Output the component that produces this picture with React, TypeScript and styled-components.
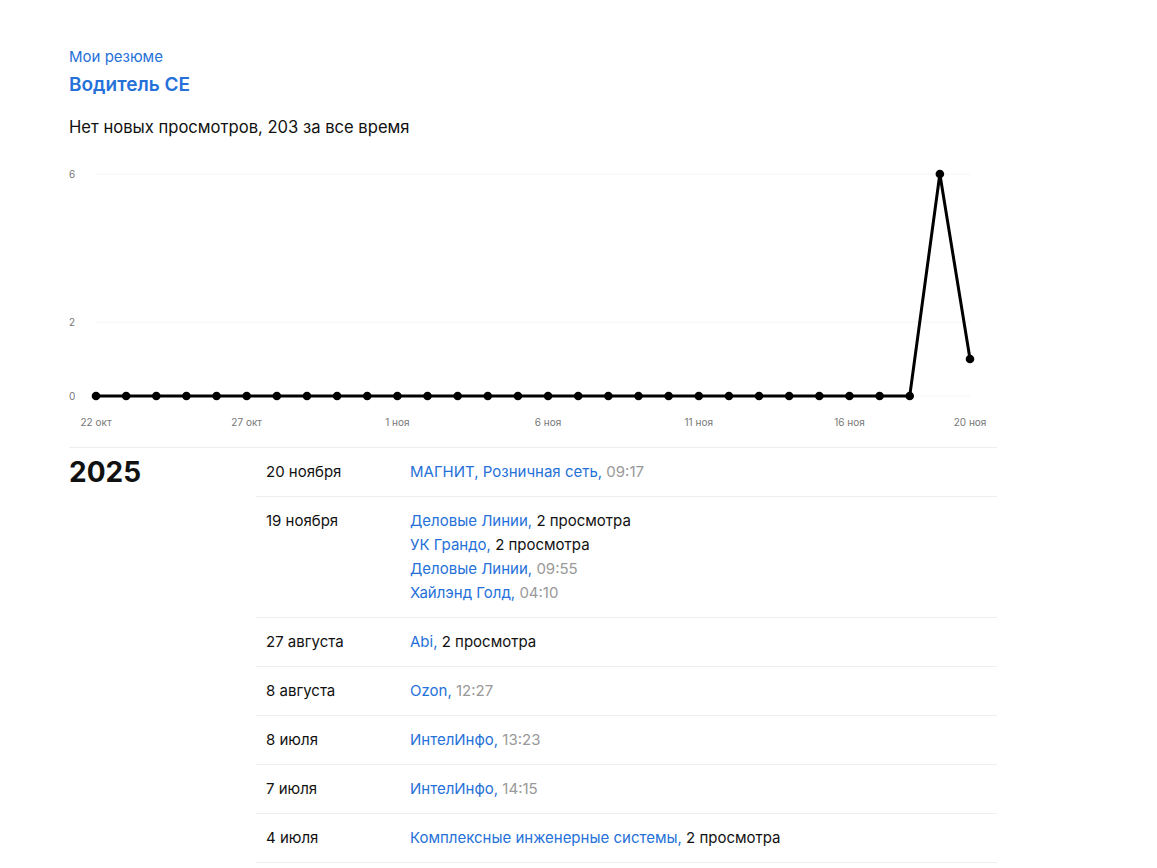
import React from 'react';
import styled, { createGlobalStyle } from 'styled-components';

const GlobalStyle = createGlobalStyle`
  body {
    margin: 0;
    background: #fff;
    font-family: 'Inter', 'Liberation Sans', sans-serif;
    color: #111;
  }
`;

const Page = styled.div`
  padding: 47px 0 0 69px;
  width: 928px;
`;

const Crumb = styled.a`
  display: block;
  font-size: 15px;
  line-height: 20px;
  color: #2671d9;
  text-decoration: none;
`;

const Title = styled.h1`
  margin: 6px 0 0;
  font-size: 19px;
  line-height: 24px;
  font-weight: 600;
  color: #2671d9;
`;

const Summary = styled.p`
  margin: 19px 0 0;
  font-size: 16.6px;
  line-height: 22px;
`;

const ChartBox = styled.div`
  margin-top: 22px;
  height: 275px;
`;

const History = styled.section`
  margin-top: 12px;
  border-top: 1px solid #eceef0;
  display: grid;
  grid-template-columns: 187px 741px;
`;

const Year = styled.div`
  padding-top: 7px;
  font-size: 28px;
  line-height: 34px;
  font-weight: 700;
`;

const Rows = styled.div`
  display: flex;
  flex-direction: column;
`;

const Row = styled.div`
  display: grid;
  grid-template-columns: 144px 1fr;
  padding: 12px 0 12px 10px;
  border-bottom: 1px solid #eceef0;
  font-size: 15px;
  line-height: 24px;
`;

const DateCell = styled.div`
  color: #111;
`;

const Entries = styled.div`
  display: flex;
  flex-direction: column;
`;

const Company = styled.a`
  color: #2671d9;
  text-decoration: none;
`;

const Note = styled.span<{ $muted?: boolean }>`
  color: ${(p) => (p.$muted ? '#999' : '#111')};
`;

type Entry = { company: string; note: string; time?: boolean };

const history: { date: string; entries: Entry[] }[] = [
  { date: '20 ноября', entries: [{ company: 'МАГНИТ, Розничная сеть,', note: '09:17', time: true }] },
  {
    date: '19 ноября',
    entries: [
      { company: 'Деловые Линии,', note: '2 просмотра' },
      { company: 'УК Грандо,', note: '2 просмотра' },
      { company: 'Деловые Линии,', note: '09:55', time: true },
      { company: 'Хайлэнд Голд,', note: '04:10', time: true },
    ],
  },
  { date: '27 августа', entries: [{ company: 'Abi,', note: '2 просмотра' }] },
  { date: '8 августа', entries: [{ company: 'Ozon,', note: '12:27', time: true }] },
  { date: '8 июля', entries: [{ company: 'ИнтелИнфо,', note: '13:23', time: true }] },
  { date: '7 июля', entries: [{ company: 'ИнтелИнфо,', note: '14:15', time: true }] },
  { date: '4 июля', entries: [{ company: 'Комплексные инженерные системы,', note: '2 просмотра' }] },
];

const values = [
  0, 0, 0, 0, 0, 0, 0, 0, 0, 0, 0, 0, 0, 0, 0, 0, 0, 0, 0, 0, 0, 0, 0, 0, 0, 0, 0, 0, 6, 1,
];

const xTicks = [
  { i: 0, label: '22 окт' },
  { i: 5, label: '27 окт' },
  { i: 10, label: '1 ноя' },
  { i: 15, label: '6 ноя' },
  { i: 20, label: '11 ноя' },
  { i: 25, label: '16 ноя' },
  { i: 29, label: '20 ноя' },
];

function ViewsChart() {
  const x0 = 27;
  const step = 874 / 29;
  const yZero = 236;
  const unit = 37;
  const px = (i: number) => x0 + i * step;
  const py = (v: number) => yZero - v * unit;
  const points = values.map((v, i) => `${px(i)},${py(v)}`).join(' ');

  return (
    <svg width="930" height="275" viewBox="0 0 930 275">
      {[0, 2, 6].map((v) => (
        <g key={v}>
          <line x1={x0} x2={901} y1={py(v)} y2={py(v)} stroke="#f3f4f5" strokeWidth="1" />
          <text x={0} y={py(v) + 3.5} fontSize="10" fill="#777" fontFamily="Inter, sans-serif">
            {v}
          </text>
        </g>
      ))}
      <polyline points={points} fill="none" stroke="#000" strokeWidth="3" strokeLinejoin="round" />
      {values.map((v, i) => (
        <circle key={i} cx={px(i)} cy={py(v)} r="4.3" fill="#000" />
      ))}
      {xTicks.map((t) => (
        <text
          key={t.label}
          x={px(t.i)}
          y={266}
          fontSize="10"
          fill="#777"
          textAnchor="middle"
          fontFamily="Inter, sans-serif"
        >
          {t.label}
        </text>
      ))}
    </svg>
  );
}

export default function App() {
  return (
    <>
      <GlobalStyle />
      <Page>
        <Crumb href="#">Мои резюме</Crumb>
        <Title>Водитель CE</Title>
        <Summary>Нет новых просмотров, 203 за все время</Summary>
        <ChartBox>
          <ViewsChart />
        </ChartBox>
        <History>
          <Year>2025</Year>
          <Rows>
            {history.map((day) => (
              <Row key={day.date}>
                <DateCell>{day.date}</DateCell>
                <Entries>
                  {day.entries.map((e, idx) => (
                    <div key={idx}>
                      <Company href="#">{e.company}</Company> <Note $muted={e.time}>{e.note}</Note>
                    </div>
                  ))}
                </Entries>
              </Row>
            ))}
          </Rows>
        </History>
      </Page>
    </>
  );
}
